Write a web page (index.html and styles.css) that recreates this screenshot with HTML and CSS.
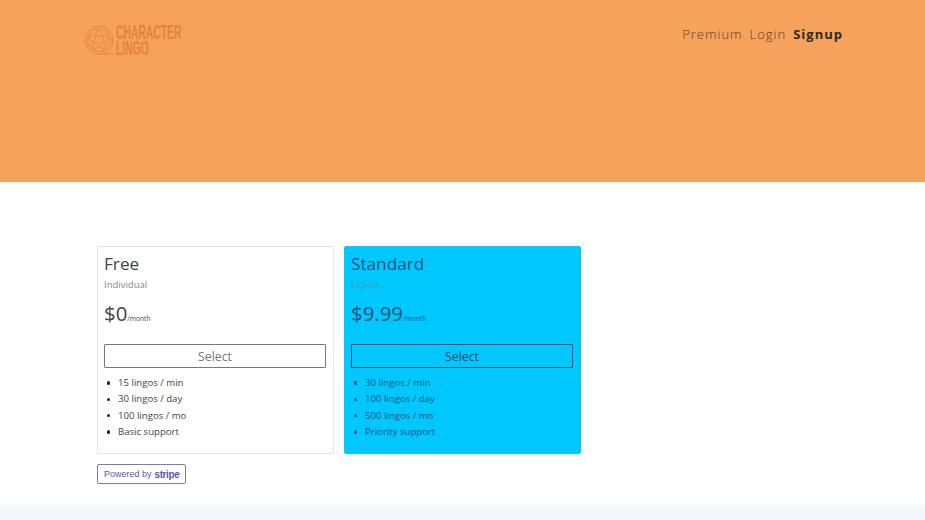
FILE: index.html
```html
<!DOCTYPE html>
<html lang="en">
<head>
  <meta charset="UTF-8">
  <meta name="viewport" content="width=device-width, initial-scale=1.0">
  <title>Character Lingo</title>
  <link rel="stylesheet" href="styles.css">
</head>
<body>
  <header class="hero">
    <a class="logo" href="#">
      <svg class="logo-reel" width="30" height="30" viewBox="0 0 30 30" fill="none" stroke="#e8863c" stroke-width="1">
        <circle cx="15" cy="15" r="14"/>
        <circle cx="15" cy="15" r="11.5"/>
        <circle cx="15" cy="8.5" r="3"/>
        <circle cx="21.5" cy="13" r="3"/>
        <circle cx="19" cy="20.5" r="3"/>
        <circle cx="11" cy="20.5" r="3"/>
        <circle cx="8.5" cy="13" r="3"/>
        <path d="M15 29h14"/>
      </svg>
      <span class="logo-text">CHARACTER<br>LINGO</span>
    </a>
    <nav class="nav">
      <a href="#">Premium</a>
      <a href="#">Login</a>
      <a class="nav-strong" href="#">Signup</a>
    </nav>
  </header>

  <main class="pricing">
    <div class="plans">
      <section class="plan">
        <h2>Free</h2>
        <p class="plan-kind">Individual</p>
        <p class="plan-price">$0<small>/month</small></p>
        <button class="plan-select plan-select-muted">Select</button>
        <ul>
          <li>15 lingos / min</li>
          <li>30 lingos / day</li>
          <li>100 lingos / mo</li>
          <li>Basic support</li>
        </ul>
      </section>
      <section class="plan plan-featured">
        <h2>Standard</h2>
        <p class="plan-kind">Expert</p>
        <p class="plan-price">$9.99<small>/month</small></p>
        <button class="plan-select">Select</button>
        <ul>
          <li>30 lingos / min</li>
          <li>100 lingos / day</li>
          <li>500 lingos / mo</li>
          <li>Priority support</li>
        </ul>
      </section>
    </div>
    <a class="stripe" href="#">Powered by <b>stripe</b></a>
  </main>

  <footer class="footer"></footer>
</body>
</html>
```

FILE: styles.css
```css
html, body {
  height: 100%;
}

body {
  margin: 0;
  font-family: "Open Sans", sans-serif;
  color: #444;
  background-color: #fff;
  display: flex;
  flex-direction: column;
  overflow: hidden;
}

a {
  color: inherit;
  text-decoration: none;
}

.hero {
  height: 182px;
  flex: none;
  background-color: #f4a25c;
  display: flex;
  justify-content: space-between;
  align-items: flex-start;
  padding: 0 82px 0 84px;
  box-sizing: border-box;
}

.logo {
  display: flex;
  align-items: flex-start;
  gap: 2px;
  margin-top: 25px;
}

.logo-text {
  margin-top: -1px;
  font-family: "Liberation Sans", sans-serif;
  font-size: 19.5px;
  line-height: 16px;
  font-weight: bold;
  color: #e5813a;
  transform: scaleX(0.53);
  transform-origin: left top;
}

.nav {
  display: flex;
  gap: 7px;
  margin-top: 24px;
  font-size: 13px;
  font-weight: 300;
  line-height: 20px;
  letter-spacing: 1px;
  color: #5a4029;
}

.nav-strong {
  font-weight: bold;
  color: #33291f;
}

.pricing {
  flex: 1;
  padding: 64px 0 0 97px;
}

.plans {
  display: flex;
  gap: 10px;
}

.plan {
  width: 237px;
  height: 208px;
  box-sizing: border-box;
  padding: 5px 7px 5px 6px;
  border: 1px solid #e2e2e2;
  border-radius: 2px;
}

.plan h2 {
  margin: 0;
  font-size: 17.2px;
  line-height: 24px;
  font-weight: 400;
}

.plan-kind {
  margin: 1px 0 0;
  font-size: 9.5px;
  line-height: 16px;
  color: #888;
}

.plan-price {
  margin: 5px 0 0;
  font-size: 20.4px;
  line-height: 30px;
}

.plan-price small {
  font-size: 6.7px;
  line-height: 1;
}

.plan-select {
  display: block;
  width: 100%;
  height: 24px;
  margin-top: 16px;
  padding: 0;
  font-family: inherit;
  font-size: 12.3px;
  color: inherit;
  background: none;
  border: 1px solid #333;
  border-radius: 1px;
}

.plan-select-muted {
  color: #777;
  border-color: #777;
}

.plan ul {
  margin: 7px 0 0;
  padding-left: 14px;
  list-style: none;
  font-size: 9.6px;
  line-height: 16.3px;
}

.plan li {
  display: flex;
  align-items: center;
}

.plan li::before {
  content: "";
  width: 3.5px;
  height: 3.5px;
  margin: 0 8px 0 -11.5px;
  border-radius: 50%;
  background-color: #222;
}

.plan-featured {
  background-color: #00c8ff;
  border-color: #00c8ff;
  color: #0f5478;
}

.plan-featured .plan-kind {
  color: #3aa0c4;
}

.plan-featured .plan-select {
  color: #0f4c68;
  border-color: #0f4c68;
}

.plan-featured li::before {
  background-color: #0f4c68;
}

.stripe {
  display: inline-flex;
  align-items: center;
  gap: 3px;
  height: 20px;
  width: 89px;
  box-sizing: border-box;
  margin-top: 10px;
  padding-left: 6px;
  font-family: "Liberation Sans", sans-serif;
  font-size: 9px;
  color: #5c55b8;
  border: 1px solid #7d78b8;
  border-radius: 2px;
}

.stripe b {
  font-size: 10px;
  letter-spacing: -0.4px;
}

.footer {
  height: 15px;
  flex: none;
  background-color: #f5f7ff;
}
```
